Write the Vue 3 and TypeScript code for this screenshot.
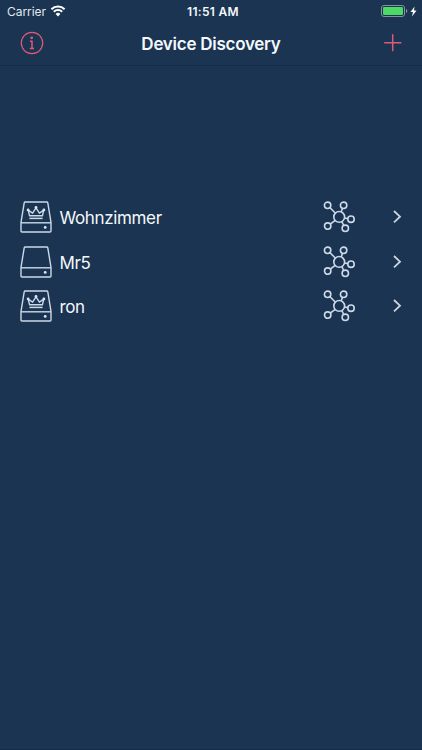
<script setup lang="ts">
interface Device {
  name: string
  master: boolean
}

const devices: Device[] = [
  { name: 'Wohnzimmer', master: true },
  { name: 'Mr5', master: false },
  { name: 'ron', master: true },
]
</script>

<template>
  <div class="screen">
    <header class="top">
      <div class="status">
        <div class="status-left">
          <span class="carrier">Carrier</span>
          <svg class="wifi" width="16" height="12" viewBox="0 0 16 12">
            <path d="M1.4 4.2A9.6 9.6 0 0 1 14.6 4.2" />
            <path d="M3.8 6.8A6.1 6.1 0 0 1 12.2 6.8" />
            <path class="dot" d="M8 11.4L5.6 9A3.5 3.5 0 0 1 10.4 9Z" />
          </svg>
        </div>
        <span class="time">11:51 AM</span>
        <div class="status-right">
          <svg width="27" height="12" viewBox="0 0 27 12">
            <rect class="case" x=".5" y=".5" width="23" height="11" rx="2.5" />
            <rect class="charge" x="2" y="2" width="20" height="8" rx="1.2" />
            <path class="cap" d="M25 4C26.7 4.5 26.7 7.5 25 8Z" />
          </svg>
          <svg width="7" height="11" viewBox="0 0 7 11">
            <path class="bolt" d="M4.6.4L.5 6H3L2 10.5L6.5 4.6H3.9Z" />
          </svg>
        </div>
      </div>
      <nav class="nav">
        <button class="bar-button" aria-label="Info">
          <svg width="24" height="24" viewBox="0 0 24 24">
            <circle class="line" cx="12" cy="12" r="10.7" />
            <circle class="solid" cx="11.7" cy="6.8" r="1.4" />
            <path class="line serif" d="M9.9 10.2H12V17.3M9.8 17.5H14" />
          </svg>
        </button>
        <h1>Device Discovery</h1>
        <button class="bar-button" aria-label="Add">
          <svg width="18" height="18" viewBox="0 0 18 18">
            <path class="line plus" d="M8.7 .3V17.3M.2 8.7H17.4" />
          </svg>
        </button>
      </nav>
    </header>

    <ul class="devices">
      <li v-for="device in devices" :key="device.name" class="device">
        <svg class="disk" width="32" height="32" viewBox="0 0 32 32">
          <path d="M5.2 1H26.8Q27.6 1 27.8 1.8L31 21.4V30Q31 31 30 31H2Q1 31 1 30V21.4L4.2 1.8Q4.4 1 5.2 1Z" />
          <path d="M1 21.8H31" />
          <circle class="led" cx="25.2" cy="26.4" r="1.4" />
          <g v-if="device.master">
            <path d="M9.6 14.8L8.2 9.2L12.6 12.2L16 6.9L19.4 12.2L23.8 9.2L22.4 14.8Z" />
            <path class="band" d="M9.4 17.4H22.6" />
            <circle class="led" cx="8.1" cy="8.9" r="1.4" />
            <circle class="led" cx="16" cy="6.4" r="1.4" />
            <circle class="led" cx="23.9" cy="8.9" r="1.4" />
          </g>
        </svg>
        <span class="name">{{ device.name }}</span>
        <svg class="network" width="32" height="32" viewBox="0 0 32 32">
          <circle cx="16.2" cy="15.9" r="5.4" />
          <circle cx="4.6" cy="4.3" r="3.2" />
          <circle cx="20.6" cy="4.3" r="3.2" />
          <circle cx="28" cy="18.2" r="3.2" />
          <circle cx="22.3" cy="27.3" r="3.2" />
          <circle cx="4.7" cy="25.1" r="3.2" />
          <path d="M6.8 6.5L12.5 12.2M19.5 7.2L18.2 11M21.5 17L24.9 17.6M18.8 20.7L20.8 24.5M12.2 19.3L7.2 23.1" />
        </svg>
        <svg class="chevron" width="9" height="14" viewBox="0 0 9 14">
          <path d="M1 1L7 6.7L1 12.4" />
        </svg>
      </li>
    </ul>
  </div>
</template>

<style>
body {
  margin: 0;
  background: #1a3451;
}
</style>

<style scoped>
.screen {
  box-sizing: border-box;
  width: 422px;
  height: 750px;
  background: #1a3451;
  border-bottom: 1px solid #142b48;
  color: #f4f8fc;
  font-family: Inter, "Liberation Sans", sans-serif;
  overflow: hidden;
}

svg {
  display: block;
  flex: none;
  fill: none;
}

.top {
  box-sizing: border-box;
  height: 66px;
  border-bottom: 1px solid #152c47;
}

.status {
  display: grid;
  grid-template-columns: 1fr auto 1fr;
  align-items: center;
  height: 22px;
  padding: 0 5px 0 7px;
}

.status-left,
.status-right {
  display: flex;
  align-items: center;
}

.status-left {
  gap: 4px;
}

.status-right {
  justify-content: flex-end;
  gap: 2px;
}

.carrier {
  font-size: 12px;
  letter-spacing: -0.05px;
  color: #e2e8ef;
}

.wifi {
  stroke: #fff;
  stroke-width: 2;
}

.wifi .dot {
  fill: #fff;
  stroke: none;
}

.time {
  padding-left: 2px;
  font-size: 12px;
  font-weight: 600;
  letter-spacing: 0.3px;
}

.case {
  stroke: #8491a1;
}

.charge {
  fill: #4cd964;
}

.cap {
  fill: #8491a1;
}

.bolt {
  fill: #fff;
}

.nav {
  display: flex;
  align-items: center;
  justify-content: space-between;
  height: 42px;
  padding: 0 17px 0 20px;
}

h1 {
  margin: 1px 0 0 -3px;
  font-size: 17px;
  font-weight: 600;
  letter-spacing: -0.26px;
}

.bar-button {
  display: flex;
  align-items: center;
  justify-content: center;
  width: 24px;
  height: 24px;
  padding: 0;
  border: 0;
  background: none;
}

.line {
  stroke: #dc5b78;
  stroke-width: 1.2;
}

.serif {
  stroke-width: 1.5;
}

.plus {
  stroke-width: 1.5;
}

.solid {
  fill: #dc5b78;
}

.devices {
  margin: 0;
  padding: 128.5px 20px 0;
  list-style: none;
}

.device {
  display: flex;
  align-items: center;
  height: 44.8px;
}

.disk {
  stroke: #ccd9e8;
  stroke-width: 1.4;
  stroke-linejoin: round;
}

.disk .band {
  stroke-width: 1.5;
}

.disk .led {
  fill: #dce6f1;
  stroke: none;
}

.name {
  flex: 1;
  padding: 2px 0 0 7.5px;
  font-size: 17px;
  letter-spacing: -0.36px;
}

.network {
  margin-right: 38px;
  stroke: #ccd9e8;
  stroke-width: 1.6;
}

.chevron {
  stroke: #ccd5df;
  stroke-width: 1.8;
}
</style>
